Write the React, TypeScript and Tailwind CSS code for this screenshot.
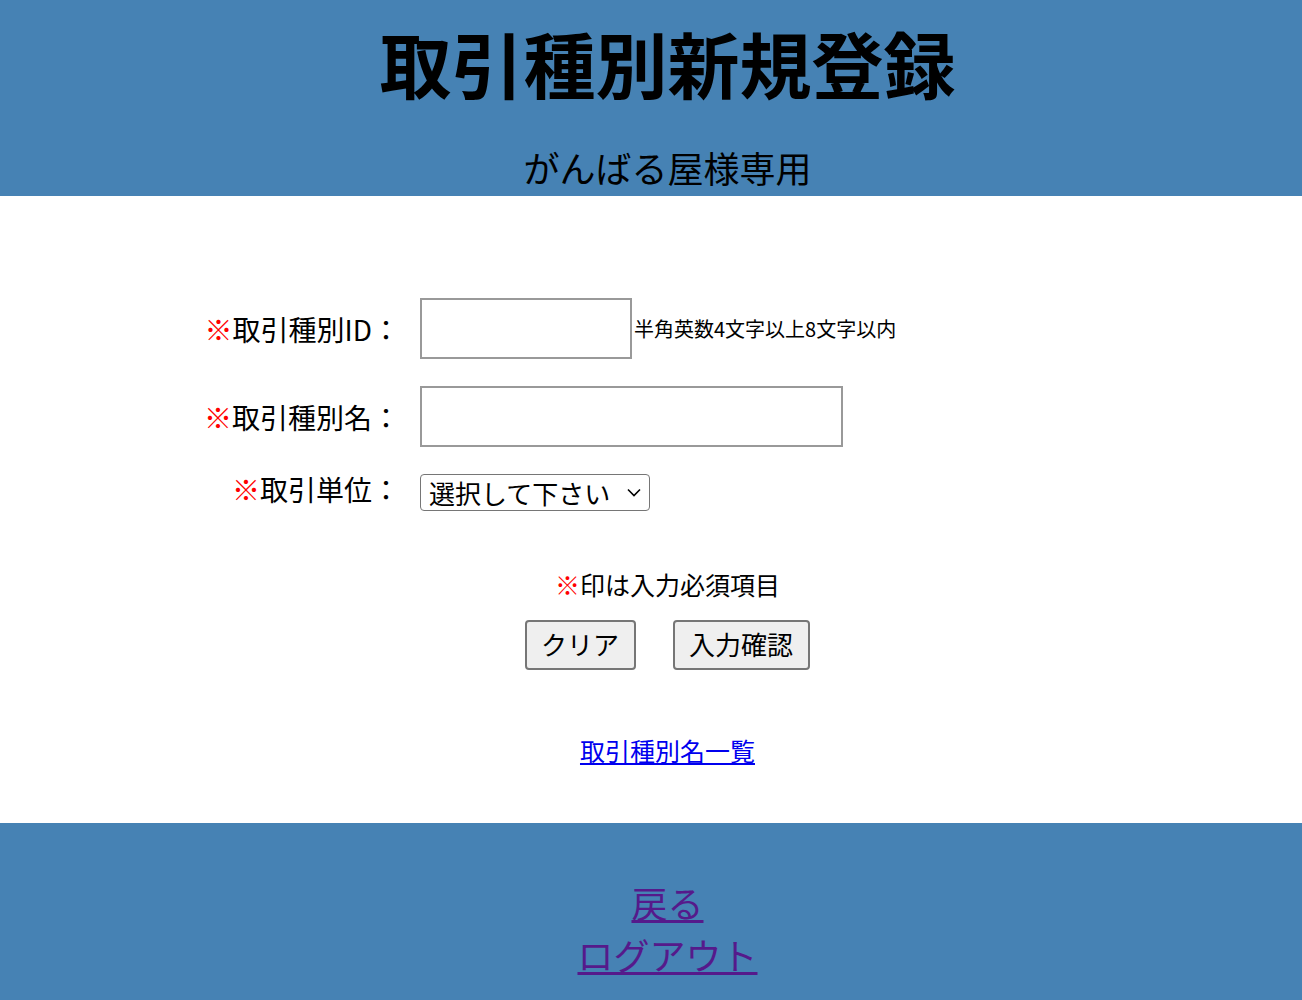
import { useState } from "react"

const font = { fontFamily: '"Noto Sans CJK JP", "Noto Sans", sans-serif' }

export default function App() {
  const [unit, setUnit] = useState("")

  return (
    <div className="w-[1302px] min-h-[1000px] bg-white text-black" style={font}>
      <header className="h-[196px] bg-[#4682b4] flex flex-col items-center pl-[33px]">
        <h1 className="mt-[26px] text-[72px] leading-[72px] font-bold">取引種別新規登録</h1>
        <p className="mt-[51px] text-[36px] leading-[36px]">がんばる屋様専用</p>
      </header>

      <form className="pt-[102px] flex flex-col" onSubmit={(e) => e.preventDefault()}>
        <div className="flex items-center h-[61px]">
          <label className="w-[400px] text-right text-[28px] leading-[30px]">
            <span className="text-[#ff0000]">※</span>取引種別ID：
          </label>
          <input type="text" className="ml-[20px] w-[212px] h-[61px] border-2 border-[#999] bg-white outline-none" />
          <span className="ml-[2px] text-[20px] leading-[24px]">半角英数4文字以上8文字以内</span>
        </div>

        <div className="flex items-center h-[61px] mt-[27px]">
          <label className="w-[400px] text-right text-[28px] leading-[30px]">
            <span className="text-[#ff0000]">※</span>取引種別名：
          </label>
          <input type="text" className="ml-[20px] w-[423px] h-[61px] border-2 border-[#999] bg-white outline-none" />
        </div>

        <div className="flex items-start h-[37px] mt-[27px]">
          <label className="w-[400px] text-right text-[28px] leading-[30px]">
            <span className="text-[#ff0000]">※</span>取引単位：
          </label>
          <div className="ml-[20px] relative w-[230px] h-[37px]">
            <select
              value={unit}
              onChange={(e) => setUnit(e.target.value)}
              className="appearance-none w-full h-full border border-[#767676] rounded-[4px] bg-white pl-[8px] text-[26px] leading-[30px] outline-none"
            >
              <option value="">選択して下さい</option>
              <option value="1">個</option>
              <option value="2">箱</option>
            </select>
            <svg className="absolute right-[9px] top-[14px] pointer-events-none" width="14" height="9" viewBox="0 0 14 9" fill="none" stroke="#000" strokeWidth="1.6">
              <path d="M1 1.5 L7 7.5 L13 1.5" />
            </svg>
          </div>
        </div>

        <p className="mt-[58px] pl-[33px] text-center text-[25px] leading-[30px]">
          <span className="text-[#ff0000]">※</span>印は入力必須項目
        </p>

        <div className="mt-[21px] flex justify-center gap-[37px] pl-[32px]">
          <button type="reset" className="w-[111px] h-[50px] bg-[#efefef] border-2 border-[#767676] rounded-[4px] text-[26px] leading-[30px] pb-[2px]">クリア</button>
          <button type="submit" className="w-[137px] h-[50px] bg-[#efefef] border-2 border-[#767676] rounded-[4px] text-[26px] leading-[30px] pb-[2px]">入力確認</button>
        </div>

        <div className="mt-[65px] pl-[33px] flex justify-center">
          <a href="#list" className="text-[25px] leading-[30px] text-[#0000ee] underline">取引種別名一覧</a>
        </div>
      </form>

      <footer className="mt-[58px] h-[177px] bg-[#4682b4] flex flex-col items-center pt-[53px] pl-[33px]">
        <a href="#back" className="text-[36px] leading-[52px] text-[#551a8b] underline">戻る</a>
        <a href="#logout" className="text-[36px] leading-[52px] text-[#551a8b] underline">ログアウト</a>
      </footer>
    </div>
  )
}
